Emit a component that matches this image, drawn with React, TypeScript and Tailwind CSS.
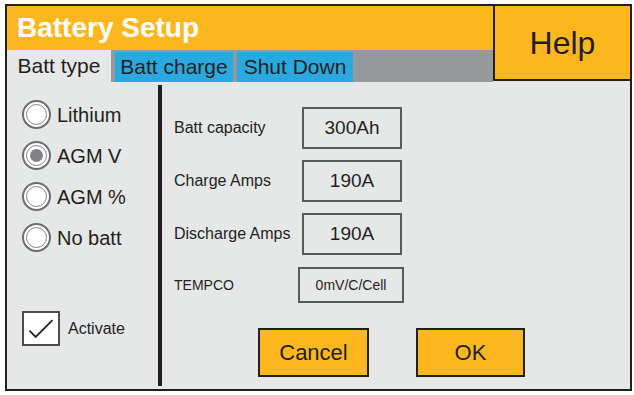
import React from "react";

const font = { fontFamily: '"Liberation Sans", Arial, sans-serif' };

function Radio({ label, checked }: { label: string; checked?: boolean }) {
  return (
    <div className="flex h-[41px] items-center">
      <div className="flex h-[29px] w-[29px] items-center justify-center rounded-full border-2 border-[#6d6e71] bg-white p-[2px]">
        <div className="flex h-full w-full items-center justify-center rounded-full border border-[#808285] bg-white">
          {checked && <div className="h-[13px] w-[13px] rounded-full bg-[#808285]" />}
        </div>
      </div>
      <span className="ml-[6px] text-[20px] text-[#231f20]">{label}</span>
    </div>
  );
}

function Field({ label, value, mt }: { label: string; value: string; mt: string }) {
  return (
    <div className={`flex items-center ${mt}`}>
      <span className="w-[128px] text-[16px] text-[#231f20]">{label}</span>
      <div className="flex h-[42px] w-[100px] items-center justify-center border-2 border-[#58595b] text-[19px] text-[#231f20]">
        {value}
      </div>
    </div>
  );
}

export default function App() {
  return (
    <div className="h-[395px] w-[634px] bg-white pl-[5px] pt-[4px]" style={font}>
      <div className="flex h-[387px] w-[627px] flex-col border-2 border-[#231f20] bg-[#e6e7e7]">
        {/* header */}
        <div className="flex h-[76px]">
          <div className="flex flex-1 flex-col">
            <div className="flex h-[44px] items-center bg-[#fdb71e] pl-[10px]">
              <span className="text-[28px] font-bold text-white">Battery Setup</span>
            </div>
            <div className="flex h-[32px] bg-[#97989b] pt-[2px]">
              <div className="-mt-[2px] flex w-[104px] items-center justify-center bg-[#e6e7e7] text-[21px] text-[#231f20]">
                Batt type
              </div>
              <div className="ml-[4px] flex w-[118px] items-center justify-center bg-[#29a9e0] text-[21px] text-[#231f20]">
                Batt charge
              </div>
              <div className="ml-[4px] flex w-[116px] items-center justify-center bg-[#29a9e0] text-[21px] text-[#231f20]">
                Shut Down
              </div>
            </div>
          </div>
          <div className="flex h-[75px] w-[137px] items-center justify-center border-b-2 border-l-2 border-[#231f20] bg-[#fdb71e] text-[32px] text-[#231f20]">
            Help
          </div>
        </div>

        {/* body */}
        <div className="flex flex-1">
          <div className="flex w-[151px] flex-col pl-[15px] pt-[12px]">
            <Radio label="Lithium" />
            <Radio label="AGM V" checked />
            <Radio label="AGM %" />
            <Radio label="No batt" />
            <div className="mt-[53px] flex items-center">
              <div className="h-[35px] w-[38px] border-2 border-[#4d4d4f] bg-white">
                <svg viewBox="0 0 38 35" className="h-full w-full">
                  <path d="M6 20 L13 27 L32 8" fill="none" stroke="#231f20" strokeWidth="2" />
                </svg>
              </div>
              <span className="ml-[8px] text-[16px] text-[#231f20]">Activate</span>
            </div>
          </div>
          <div className="my-[3px] w-[4px] bg-[#231f20]" />
          <div className="flex flex-1 flex-col pl-[12px] pt-[25px]">
            <Field label="Batt capacity" value="300Ah" mt="" />
            <Field label="Charge Amps" value="190A" mt="mt-[11px]" />
            <Field label="Discharge Amps" value="190A" mt="mt-[11px]" />
            <div className="mt-[12px] flex items-center">
              <span className="w-[124px] text-[14px] text-[#231f20]">TEMPCO</span>
              <div className="flex h-[36px] w-[106px] items-center justify-center border-2 border-[#58595b] text-[14px] text-[#231f20]">
                0mV/C/Cell
              </div>
            </div>
            <div className="mt-[25px] flex pl-[84px]">
              <div className="flex h-[49px] w-[111px] items-center justify-center border-2 border-[#231f20] bg-[#fdb71e] text-[22px] text-[#231f20]">
                Cancel
              </div>
              <div className="ml-[47px] flex h-[49px] w-[109px] items-center justify-center border-2 border-[#231f20] bg-[#fdb71e] text-[22px] text-[#231f20]">
                OK
              </div>
            </div>
          </div>
        </div>
      </div>
    </div>
  );
}
